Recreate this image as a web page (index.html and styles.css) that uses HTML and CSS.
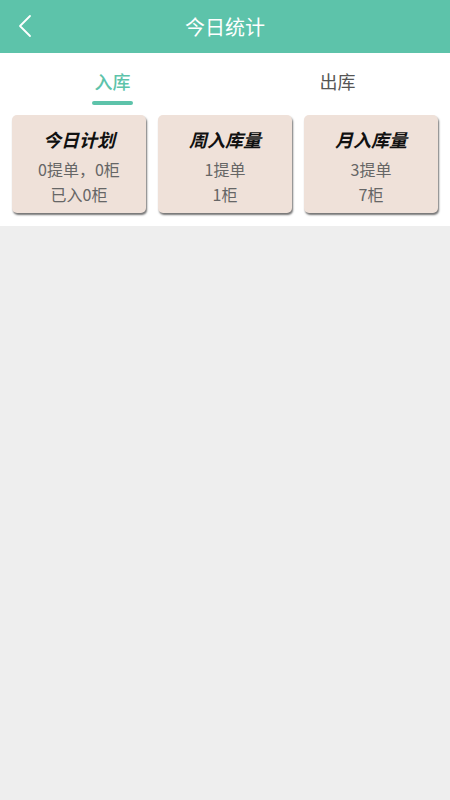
FILE: index.html
```html
<!DOCTYPE html>
<html lang="zh">
<head>
<meta charset="utf-8">
<link rel="stylesheet" href="styles.css">
</head>
<body>
<div class="page">
  <header class="topbar">
    <span class="back">
      <svg width="14" height="24" viewBox="0 0 14 24"><path d="M12 2 L2 12 L12 22" fill="none" stroke="#fff" stroke-width="1.8" stroke-linecap="round" stroke-linejoin="round"/></svg>
    </span>
    <h1 class="title">今日统计</h1>
  </header>
  <section class="panel">
    <div class="tabs">
      <div class="tab active"><span class="tab-label">入库</span><span class="bar"></span></div>
      <div class="tab"><span class="tab-label">出库</span></div>
    </div>
    <div class="cards">
      <div class="card">
        <div class="card-title">今日计划</div>
        <div class="card-line">0提单，0柜</div>
        <div class="card-line">已入0柜</div>
      </div>
      <div class="card">
        <div class="card-title">周入库量</div>
        <div class="card-line">1提单</div>
        <div class="card-line">1柜</div>
      </div>
      <div class="card">
        <div class="card-title">月入库量</div>
        <div class="card-line">3提单</div>
        <div class="card-line">7柜</div>
      </div>
    </div>
  </section>
</div>
</body>
</html>
```

FILE: styles.css
```css
* { box-sizing: border-box; }
html, body { margin: 0; padding: 0; }
body {
  background: #eeeeee;
  font-family: "Noto Sans CJK SC", "Noto Sans", sans-serif;
  width: 450px;
  min-height: 800px;
}
.topbar {
  height: 53px;
  background: #5dc3aa;
  display: flex;
  align-items: center;
  justify-content: center;
  position: relative;
}
.back {
  position: absolute;
  left: 18px;
  top: 14px;
  width: 14px;
  height: 24px;
  display: flex;
}
.title {
  margin: 0;
  color: #fff;
  font-size: 20px;
  font-weight: normal;
  line-height: 28px;
}
.panel {
  background: #fff;
  padding-bottom: 13px;
}
.tabs {
  display: flex;
  padding-top: 16px;
}
.tab {
  flex: 1;
  display: flex;
  flex-direction: column;
  align-items: center;
  height: 36px;
}
.tab-label {
  font-size: 18px;
  line-height: 24px;
  color: #555;
}
.tab.active .tab-label { color: #5dc3aa; font-weight: 500; }
.bar {
  margin-top: 8px;
  width: 41px;
  height: 4px;
  border-radius: 2px;
  background: #5dc3aa;
}
.cards {
  display: grid;
  grid-template-columns: repeat(3, 134px);
  gap: 12px;
  padding: 10px 12px 0;
}
.card {
  background: #efe1d9;
  border-radius: 5px;
  box-shadow: 1px 2px 2px rgba(0,0,0,0.55);
  height: 98px;
  padding-top: 10px;
  text-align: center;
}
.card-title {
  font-size: 18px;
  line-height: 28px;
  font-weight: bold;
  font-style: italic;
  color: #111;
  margin-bottom: 4px;
}
.card-line {
  font-size: 16px;
  line-height: 25px;
  color: #666;
}
```
